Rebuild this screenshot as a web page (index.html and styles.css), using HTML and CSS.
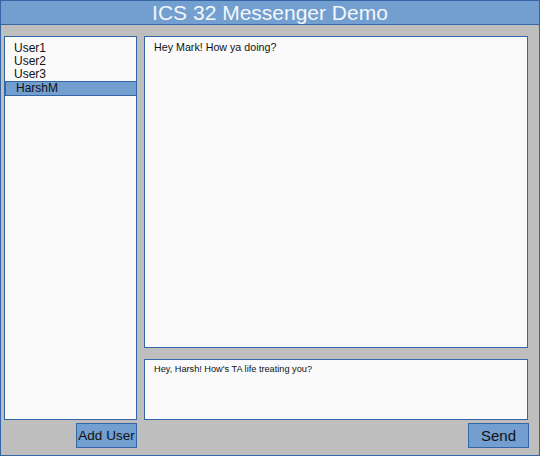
FILE: index.html
```html
<!DOCTYPE html>
<html>
<head>
<meta charset="utf-8">
<link rel="stylesheet" href="styles.css">
</head>
<body>
<div class="window">
  <div class="titlebar">ICS 32 Messenger Demo</div>
  <div class="content">
    <div class="left">
      <ul class="userlist">
        <li class="user">User1</li>
        <li class="user">User2</li>
        <li class="user">User3</li>
        <li class="user selected">HarshM</li>
      </ul>
      <div class="btnrow"><button class="btn add">Add User</button></div>
    </div>
    <div class="right">
      <div class="messages"><div class="msg">Hey Mark! How ya doing?</div></div>
      <div class="entry">Hey, Harsh! How's TA life treating you?</div>
      <div class="btnrow"><button class="btn send">Send</button></div>
    </div>
  </div>
</div>
</body>
</html>
```
FILE: styles.css
```css
html, body { margin: 0; padding: 0; background: #bebebe; }
.window {
  width: 540px; height: 456px; box-sizing: border-box;
  border: 1px solid #3465a4; border-top: none;
  background: #bebebe;
  font-family: "Liberation Sans", Arial, sans-serif;
  display: flex; flex-direction: column;
}
.titlebar {
  background: #729fcf; color: #f4f6fa;
  border-top: 1px solid #3465a4; box-sizing: border-box;
  border-bottom: 1px solid #3465a4; height: 25px;
  text-align: center; font-size: 21px; line-height: 23px;
}
.content {
  display: grid; grid-template-columns: 133px 384px; column-gap: 7px;
  padding: 11px 0 0 3px;
}
.left, .right { display: flex; flex-direction: column; }
.userlist {
  list-style: none; margin: 0; padding: 5px 0 0 0;
  height: 384px; box-sizing: border-box;
  background: #fafafa; border: 1px solid #3465a4;
  font-size: 12px; color: #111;
}
.user { height: 13px; line-height: 13px; padding-left: 9px; }
.user.selected {
  background: #729fcf; border: 1px solid #3465a4; margin-right: -1px;
  padding-left: 10px; height: 13px;
}
.btnrow { display: flex; justify-content: flex-end; margin-top: 3px; }
.btn {
  width: 61px; height: 25px; box-sizing: border-box;
  background: #729fcf; border: 1px solid #3465a4; color: #111;
  font-family: "Liberation Sans", Arial, sans-serif; padding: 0;
}
.add { font-size: 13.5px; }
.send { font-size: 15px; margin-right: -1px; }
.messages {
  height: 312px; box-sizing: border-box;
  background: #fafafa; border: 1px solid #3465a4;
  padding: 4px 9px; font-size: 10.7px; color: #111;
}
.entry {
  height: 61px; box-sizing: border-box; margin-top: 11px;
  background: #fafafa; border: 1px solid #3465a4;
  padding: 4px 9px; font-size: 9.2px; color: #111;
}
```
